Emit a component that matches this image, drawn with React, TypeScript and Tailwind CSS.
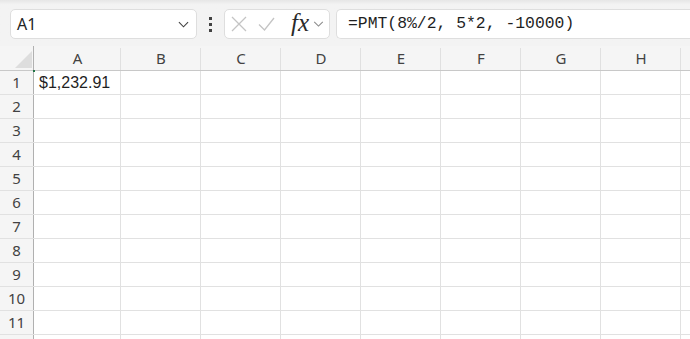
import React from 'react';

const cols = ['A', 'B', 'C', 'D', 'E', 'F', 'G', 'H'];
const rows = [1, 2, 3, 4, 5, 6, 7, 8, 9, 10, 11, 12];

const colWidth = (c: string) => (c === 'A' ? 'w-[87px]' : 'w-[80px]');

const Chevron = ({ className }: { className?: string }) => (
  <svg className={className} viewBox="0 0 12 7" fill="none" stroke="currentColor" strokeWidth={1.2}>
    <path d="M1 1l5 5 5-5" />
  </svg>
);

export default function App() {
  return (
    <div className="w-[690px] h-[339px] overflow-hidden bg-white font-['Noto_Sans',sans-serif] select-none">
      {/* Formula bar */}
      <div className="h-[46px] bg-[#f3f3f3] bg-gradient-to-b from-[#e6e6e6] via-[#f3f3f3] via-[10%] to-[#f3f3f3] flex items-start pt-[9px] pl-[10px]">
        <div className="w-[187px] h-[30px] bg-white border border-[#dedede] rounded-[5px] flex items-center justify-between pl-[6px] pr-[7px]">
          <span className="text-[16px] text-[#242424] leading-none">A1</span>
          <Chevron className="w-[11px] h-[7px] text-[#424242]" />
        </div>
        <div className="w-[27px] h-[30px] flex flex-col items-center justify-center gap-[3px]">
          <span className="w-[3px] h-[3px] bg-[#424242]" />
          <span className="w-[3px] h-[3px] bg-[#424242]" />
          <span className="w-[3px] h-[3px] bg-[#424242]" />
        </div>
        <div className="w-[106px] h-[30px] bg-white border border-[#dedede] rounded-[5px] flex items-center pl-[6px]">
          <svg className="w-[16px] h-[16px] text-[#c4c4c4]" viewBox="0 0 16 16" stroke="currentColor" strokeWidth={1.3} fill="none">
            <path d="M1 1l14 14M15 1L1 15" />
          </svg>
          <svg className="w-[17px] h-[14px] ml-[11px] text-[#c4c4c4]" viewBox="0 0 17 14" stroke="currentColor" strokeWidth={1.3} fill="none">
            <path d="M1 7.5l5.5 5.5L16 1" />
          </svg>
          <span className="ml-[16px] font-['Liberation_Serif',serif] italic text-[25px] leading-none text-[#2a2a2a] -mt-[4px]">
            fx
          </span>
          <Chevron className="ml-[4px] w-[11px] h-[6px] text-[#8a8a8a]" />
        </div>
        <div className="ml-[6px] flex-1 h-[30px] bg-white border border-r-0 border-[#dedede] rounded-l-[5px] flex items-center pl-[11px]">
          <span className="font-['Liberation_Mono',monospace] text-[16.4px] text-[#1f1f1f] leading-none whitespace-pre">
            =PMT(8%/2, 5*2, -10000)
          </span>
        </div>
      </div>

      {/* Column headers */}
      <div className="flex h-[25px] bg-[#f5f5f5] border-b border-[#c8c8c8]">
        <div className="w-[34px] shrink-0 border-r border-[#b0b0b0] relative">
          <svg className="absolute left-[15px] top-[5px] w-[17px] h-[17px]" viewBox="0 0 17 17">
            <path d="M17 0V17H0Z" fill="#dddddd" />
          </svg>
          <span className="absolute right-[-2px] bottom-[-2px] w-[2px] h-[2px] bg-[#217346]" />
        </div>
        {cols.map((c) => (
          <div
            key={c}
            className={`${colWidth(c)} shrink-0 flex items-center justify-center relative text-[15px] text-[#424242]`}
          >
            {c}
            <span className="absolute right-0 top-[2px] bottom-0 w-px bg-[#e0e0e0]" />
          </div>
        ))}
        <div className="flex-1" />
      </div>

      {/* Rows */}
      {rows.map((r) => (
        <div key={r} className="flex h-[24px] border-b border-[#e1e1e1]">
          <div className="w-[34px] shrink-0 bg-[#f5f5f5] border-r border-[#b0b0b0] flex items-center justify-center text-[15px] text-[#424242]">
            {r < 12 ? r : ''}
          </div>
          {cols.map((c) => (
            <div
              key={c}
              className={`${colWidth(c)} shrink-0 border-r border-[#e1e1e1] flex items-center pl-[5px] font-['Liberation_Sans',sans-serif] text-[16px] text-[#1f1f1f]`}
            >
              {r === 1 && c === 'A' ? '$1,232.91' : ''}
            </div>
          ))}
          <div className="flex-1" />
        </div>
      ))}
    </div>
  );
}
